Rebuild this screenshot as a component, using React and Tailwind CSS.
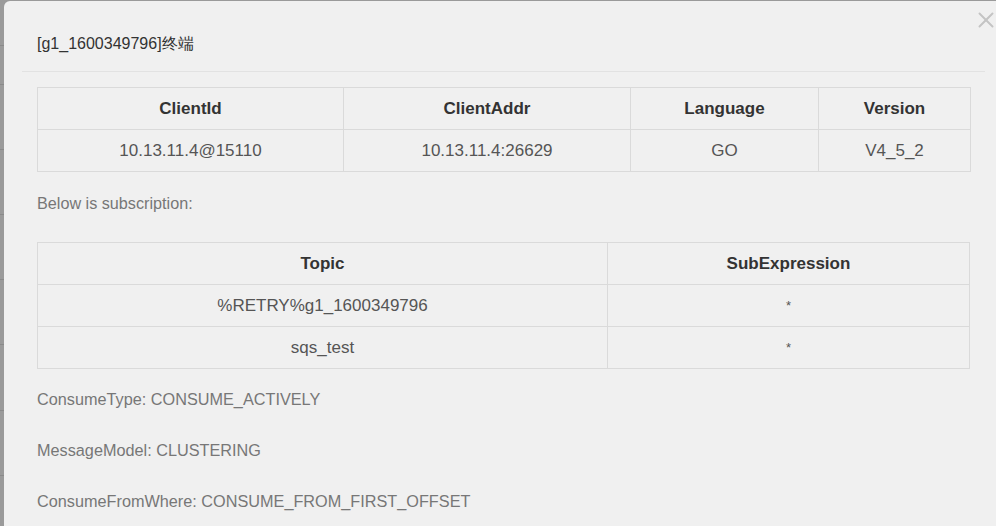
import { X } from "lucide-react";

const clientCols = [
  { label: "ClientId", w: "w-[306px]" },
  { label: "ClientAddr", w: "w-[287px]" },
  { label: "Language", w: "w-[188px]" },
  { label: "Version", w: "w-[152px]" },
];

const clientRow = ["10.13.11.4@15110", "10.13.11.4:26629", "GO", "V4_5_2"];

const subs = [
  { topic: "%RETRY%g1_1600349796", expr: "*" },
  { topic: "sqs_test", expr: "*" },
];

const backdropRows = [46, 39, 65, 65, 65, 65, 66, 65, 65];

export default function App() {
  return (
    <div className="relative w-[996px] h-[526px] overflow-hidden bg-[#9a9a9a] font-['Liberation_Sans',Arial,sans-serif]">
      {/* page behind the overlay */}
      <div className="flex flex-col">
        {backdropRows.map((h, i) => (
          <div key={i} className="border-b border-[#8a8a8a]" style={{ height: h }} />
        ))}
      </div>

      {/* modal */}
      <div className="absolute left-[4px] top-[1px] w-[1010px] h-[560px] rounded-tl-[6px] bg-[#f0f0f0]">
        <button className="absolute left-[969px] top-[6px] text-[#c4c4c4]">
          <X size={26} strokeWidth={1.8} />
        </button>

        <div className="pl-[18px] w-[981px]">
          <div className="px-[15px] pt-[33px] pb-[17px] border-b border-[#e2e2e2]">
            <h4 className="text-[16px] leading-[20px] text-[#333]">[g1_1600349796]终端</h4>
          </div>

          <div className="px-[15px] pt-[15px]">
            <table className="w-full border-collapse table-fixed">
              <thead>
                <tr>
                  {clientCols.map((c) => (
                    <th
                      key={c.label}
                      className={`${c.w} h-[42px] border border-[#dadada] text-[17px] font-bold text-[#333]`}
                    >
                      {c.label}
                    </th>
                  ))}
                </tr>
              </thead>
              <tbody>
                <tr>
                  {clientRow.map((v, i) => (
                    <td key={i} className="h-[42px] border border-[#dadada] text-center text-[17px] text-[#555]">
                      {v}
                    </td>
                  ))}
                </tr>
              </tbody>
            </table>

            <p className="mt-[21px] text-[16.2px] leading-[20px] text-[#777]">Below is subscription:</p>

            <table className="mt-[29px] w-full border-collapse table-fixed">
              <thead>
                <tr>
                  <th className="w-[570px] h-[42px] border border-[#dadada] text-[17px] font-bold text-[#333]">Topic</th>
                  <th className="h-[42px] border border-[#dadada] text-[17px] font-bold text-[#333]">SubExpression</th>
                </tr>
              </thead>
              <tbody>
                {subs.map((s) => (
                  <tr key={s.topic}>
                    <td className="h-[42px] border border-[#dadada] text-center text-[17px] text-[#555]">{s.topic}</td>
                    <td className="h-[42px] border border-[#dadada] text-center text-[13px] text-[#555]">{s.expr}</td>
                  </tr>
                ))}
              </tbody>
            </table>

            <div className="mt-[20px] flex flex-col gap-[31px] text-[16.25px] leading-[20px] text-[#777]">
              <p>ConsumeType: CONSUME_ACTIVELY</p>
              <p>MessageModel: CLUSTERING</p>
              <p>ConsumeFromWhere: CONSUME_FROM_FIRST_OFFSET</p>
            </div>
          </div>
        </div>
      </div>
    </div>
  );
}
